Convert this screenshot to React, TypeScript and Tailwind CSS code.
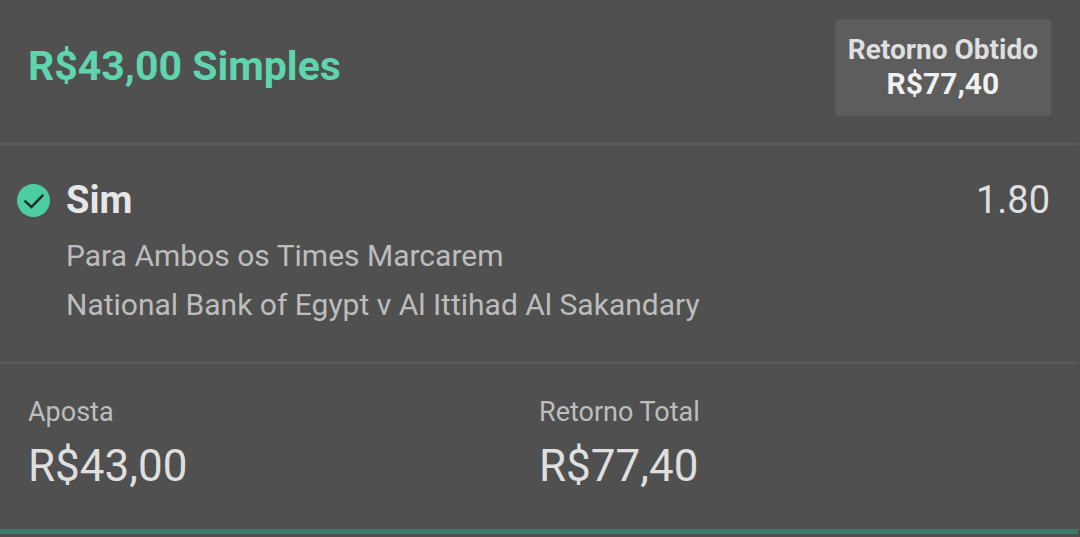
export default function App() {
  return (
    <main className="min-h-screen bg-[#505050] pr-0.5 font-['Roboto',sans-serif] text-[#dfdfdf]">
      <header className="flex items-start justify-between border-b-2 border-[#5c5c5c] pr-[27px] pb-[27px] pl-7 pt-[19px]">
        <h1 className="mt-[23px] text-[41px] leading-[48px] font-bold text-[#5fd5ae]">R$43,00 Simples</h1>
        <div className="rounded bg-[#5d5d5d] px-[13px] pt-[14px] pb-[15px] text-center font-bold">
          <p className="text-[28px] leading-[34px]">Retorno Obtido</p>
          <p className="text-[30px] leading-[34px] text-[#f0f0f0]">R$77,40</p>
        </div>
      </header>
      <section className="flex items-start border-b-2 border-[#5c5c5c] pr-7 pb-[33px] pl-[17px] pt-[31px]">
        <svg className="mt-2 mr-4 size-[33px] shrink-0" viewBox="0 0 33 33" aria-hidden="true">
          <circle cx="16.5" cy="16.5" r="16.5" fill="#4dcea2" />
          <path d="M7.5 16.7L14.4 23L26.3 10.8" fill="none" stroke="#182c26" strokeWidth="2.4" />
        </svg>
        <div className="grow">
          <h2 className="text-[38px] leading-12 font-bold text-[#e6e6e6]">Sim</h2>
          <p className="mt-2 text-[30px] leading-12 text-[#bdbdbd]">Para Ambos os Times Marcarem</p>
          <p className="mt-px text-[30px] leading-12 text-[#bdbdbd]">National Bank of Egypt v Al Ittihad Al Sakandary</p>
        </div>
        <p className="text-[38px] leading-12">1.80</p>
      </section>
      <footer className="grid grid-cols-2 border-b-[5px] border-[#3b7b67] pr-7 pb-[35px] pl-7 pt-8">
        <div>
          <p className="text-[27px] leading-8 text-[#bdbdbd]">Aposta</p>
          <p className="mt-[10px] text-[44px] leading-14">R$43,00</p>
        </div>
        <div>
          <p className="text-[27px] leading-8 text-[#bdbdbd]">Retorno Total</p>
          <p className="mt-[10px] text-[44px] leading-14">R$77,40</p>
        </div>
      </footer>
    </main>
  );
}
